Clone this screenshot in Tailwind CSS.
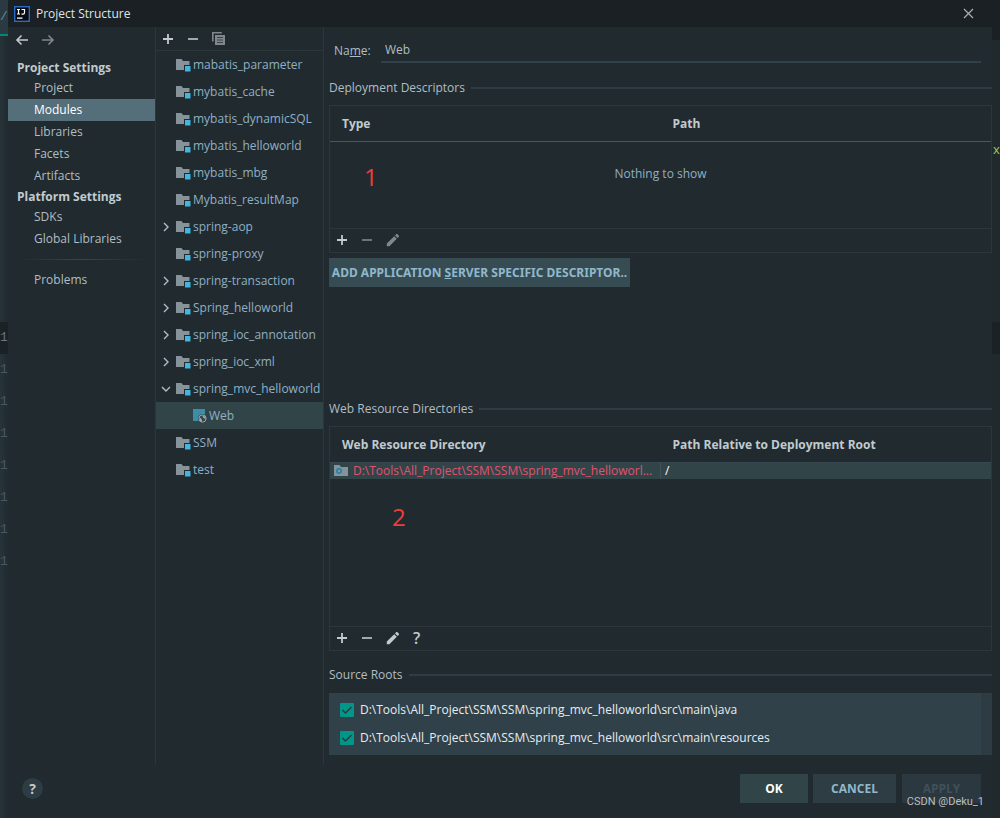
<!DOCTYPE html>
<html lang="en">

<head>
    <meta charset="UTF-8">
    <meta name="viewport" content="width=device-width, initial-scale=1.0">
    <title>Project Structure</title>
    <script src="https://cdn.jsdelivr.net/npm/@tailwindcss/browser@4"></script>
</head>

<body class="bg-[#212a2f] font-['Open_Sans',sans-serif] text-xs text-[#b0bec5]">

    <!-- Shared icons -->
    <svg class="hidden">
        <symbol id="plus" viewBox="0 0 12 12"><path d="M6 1v10M1 6h10" stroke="currentColor" stroke-width="1.8" fill="none" /></symbol>
        <symbol id="minus" viewBox="0 0 12 12"><path d="M1 6h10" stroke="currentColor" stroke-width="1.6" fill="none" /></symbol>
        <symbol id="pencil" viewBox="0 0 14 14"><path d="M.8 10.6v2.6h2.6l7.4-7.4-2.6-2.6zM9 2.4 11.6 5l1.3-1.3c.3-.3.3-.7 0-1l-1.6-1.6c-.3-.3-.7-.3-1 0z" fill="currentColor" /></symbol>
        <symbol id="folder" viewBox="0 0 15 14">
            <path d="M0 1h5.5L7 3h6.5v4H8v5H0z" fill="#87939a" />
            <path d="M9 8h5.5v5.5H9z" fill="#40b6e0" />
        </symbol>
        <symbol id="right" viewBox="0 0 8 10"><path d="M2 1l4 4-4 4" stroke="currentColor" stroke-width="1.4" fill="none" /></symbol>
        <symbol id="down" viewBox="0 0 10 8"><path d="M1 2l4 4 4-4" stroke="currentColor" stroke-width="1.4" fill="none" /></symbol>
    </svg>

    <div class="flex min-h-screen">

        <!-- Editor gutter behind the dialog -->
        <div class="flex w-2 shrink-0 flex-col bg-linear-to-r from-[#26343a] to-[#212a2f] font-['Liberation_Mono',monospace] text-[13px] text-[#4b585e]">
            <div class="flex h-9 items-center border-b-2 border-[#00897b] bg-[#2b3a42] text-[#4f8ea8]">/</div>
            <div class="h-[286px]"></div>
            <div class="flex h-8 items-center bg-[#1b2225] text-[#65757b]">1</div>
            <div class="flex h-8 items-center">1</div>
            <div class="flex h-8 items-center">1</div>
            <div class="flex h-8 items-center">1</div>
            <div class="flex h-8 items-center">1</div>
            <div class="flex h-8 items-center">1</div>
            <div class="flex h-8 items-center">1</div>
            <div class="flex h-8 items-center">1</div>
        </div>

        <!-- Dialog -->
        <div class="flex min-w-0 flex-1 flex-col">
            <header class="flex h-[27px] items-center bg-[#1a2023] pr-[18px] pl-[6px] text-[#dfe5e8]">
                <svg class="mr-[6px] size-4" viewBox="0 0 16 16">
                    <rect x=".7" y=".7" width="14.6" height="14.6" fill="#080c12" stroke="#2a6cc4" stroke-width="1.4" />
                    <path d="M3 3.5h3M4.500 3.500v4.500M3 8h3M7.500 3.500h3v3.200c0 1-.5 1.400-1.400 1.400H7.500M3 12.200h5.500" stroke="#fff" stroke-width="1.200" fill="none" />
                </svg>
                <h1 class="flex-1">Project Structure</h1>
                <button type="button" aria-label="Close" class="text-[#a9b0b3]">
                    <svg class="size-[11px]" viewBox="0 0 11 11"><path d="M1 1l9 9M10 1l-9 9" stroke="currentColor" stroke-width="1.200" /></svg>
                </button>
            </header>

            <div class="flex flex-1">
                <!-- Settings navigation -->
                <nav class="w-[148px] shrink-0 border-r border-[#2c373c]">
                    <div class="flex h-[31px] items-center gap-3 pb-[5px] pl-[7px]">
                        <button type="button" aria-label="Back" class="text-[#c3cacd]">
                            <svg class="h-3 w-[14px]" viewBox="0 0 14 12"><path d="M13 6H2M6.500 1.500L2 6l4.500 4.500" stroke="currentColor" stroke-width="1.600" fill="none" /></svg>
                        </button>
                        <button type="button" aria-label="Forward" class="text-[#80888b]">
                            <svg class="h-3 w-[14px]" viewBox="0 0 14 12"><path d="M1 6h11M7.500 1.500L12 6l-4.500 4.500" stroke="currentColor" stroke-width="1.600" fill="none" /></svg>
                        </button>
                    </div>
                    <h2 class="pl-[9px] font-bold leading-[19px] text-[#c0cbd0]">Project Settings</h2>
                    <a href="#" class="block pl-[26px] leading-[22px]">Project</a>
                    <a href="#" class="block bg-[#546e7a] pl-[26px] leading-[22px] text-white">Modules</a>
                    <a href="#" class="block pl-[26px] leading-[22px]">Libraries</a>
                    <a href="#" class="block pl-[26px] leading-[22px]">Facets</a>
                    <a href="#" class="block pl-[26px] leading-[22px]">Artifacts</a>
                    <h2 class="pl-[9px] font-bold leading-[19px] text-[#c0cbd0]">Platform Settings</h2>
                    <a href="#" class="block pl-[26px] leading-[22px]">SDKs</a>
                    <a href="#" class="block pl-[26px] leading-[22px]">Global Libraries</a>
                    <div class="mx-2 my-[9px] h-px bg-linear-to-r from-transparent via-[#37474f] to-transparent"></div>
                    <a href="#" class="block pl-[26px] leading-[22px]">Problems</a>
                </nav>

                <!-- Module tree -->
                <section class="w-[168px] shrink-0 border-r border-[#2c373c] text-[#8fb0c4]">
                    <div class="flex h-6 items-center gap-[13px] border-b border-[#2c373c] pl-[6px] text-[#c3cacd]">
                        <button type="button" aria-label="Add"><svg class="size-3"><use href="#plus" /></svg></button>
                        <button type="button" aria-label="Remove"><svg class="size-3"><use href="#minus" /></svg></button>
                        <button type="button" aria-label="Copy" class="text-[#80888b]">
                            <svg class="size-[13px]" viewBox="0 0 13 13">
                                <path d="M.8 9.500V.8h9" stroke="currentColor" stroke-width="1.600" fill="none" />
                                <path d="M3 3h10v10H3z" fill="currentColor" />
                                <path d="M5 5.500h6M5 8h6M5 10.500h6" stroke="#3a4347" stroke-width="1" />
                            </svg>
                        </button>
                    </div>
                    <ul id="tree"></ul>
                </section>

                <!-- Facet editor -->
                <main class="flex min-w-0 flex-1 flex-col pt-[11px] pb-[10px] pl-[5px]">
                    <div class="flex h-[25px] items-stretch pr-[11px] pl-[5px]">
                        <label for="name" class="w-[47px] leading-[25px]">Na<u>m</u>e:</label>
                        <input type="text" id="name" value="Web" class="min-w-0 flex-1 border-b-2 border-[#314149] bg-transparent px-1 outline-none">
                    </div>

                    <div class="mt-[15px] flex h-5 items-center gap-[6px]">
                        <h3>Deployment Descriptors</h3>
                        <div class="h-[2px] flex-1 bg-[#2f3c42]"></div>
                    </div>
                    <div class="mt-[7px] border border-[#2c373c]">
                        <table class="w-full table-fixed text-left">
                            <thead>
                                <tr class="h-[35px] border-b border-[#415a63] text-[#c0cbd0]">
                                    <th class="px-3 pt-[2px] font-bold">Type</th>
                                    <th class="px-3 pt-[2px] font-bold">Path</th>
                                </tr>
                            </thead>
                            <tbody>
                                <tr class="h-[87px]">
                                    <td colspan="2" class="pb-[22px] text-center text-[#8fb0c4]">Nothing to show</td>
                                </tr>
                            </tbody>
                        </table>
                        <div class="flex h-6 items-center gap-[13px] border-t border-[#2c373c] pb-px pl-[6px] text-[#c3cacd]">
                            <button type="button" aria-label="Add descriptor"><svg class="size-3"><use href="#plus" /></svg></button>
                            <button type="button" aria-label="Remove descriptor" class="text-[#80888b]"><svg class="size-3"><use href="#minus" /></svg></button>
                            <button type="button" aria-label="Edit descriptor" class="text-[#80888b]"><svg class="size-[14px]"><use href="#pencil" /></svg></button>
                        </div>
                    </div>
                    <button type="button" class="mt-[5px] h-[29px] w-[301px] whitespace-nowrap bg-[#374b52] font-['Noto_Sans',sans-serif] font-bold text-[#8fb8cc]">ADD APPLICATION <u>S</u>ERVER SPECIFIC DESCRIPTOR..</button>

                    <div class="min-h-4 flex-1"></div>

                    <div class="flex h-5 items-center gap-[6px]">
                        <h3>Web Resource Directories</h3>
                        <div class="h-[2px] flex-1 bg-[#2f3c42]"></div>
                    </div>
                    <div class="mt-[7px] flex h-[225px] flex-col border border-[#2c373c]">
                        <table class="w-full table-fixed text-left">
                            <thead>
                                <tr class="h-[35px] border-b border-[#37474f] text-[#c0cbd0]">
                                    <th class="px-3 pt-[2px] font-bold">Web Resource Directory</th>
                                    <th class="px-3 pt-[2px] font-bold">Path Relative to Deployment Root</th>
                                </tr>
                            </thead>
                            <tbody>
                                <tr class="bg-[#314549]">
                                    <td class="border-r border-[#3f545a] p-0 pl-1">
                                        <div class="flex h-4 items-center gap-1 text-[#e0526f]">
                                            <svg class="h-3 w-[15px] shrink-0" viewBox="0 0 15 12">
                                                <path d="M0 0h5.500L7 2h7v9H0z" fill="#87939a" />
                                                <circle cx="5" cy="6" r="2.200" fill="#87939a" stroke="#2382a8" stroke-width="1.600" />
                                            </svg>
                                            <span>D:\Tools\All_Project\SSM\SSM\spring_mvc_helloworl...</span>
                                        </div>
                                    </td>
                                    <td class="p-0 pl-1 leading-4 text-white">/</td>
                                </tr>
                            </tbody>
                        </table>
                        <div class="mt-auto flex h-6 items-center gap-[13px] border-t border-[#2c373c] pb-px pl-[6px] text-[#c3cacd]">
                            <button type="button" aria-label="Add directory"><svg class="size-3"><use href="#plus" /></svg></button>
                            <button type="button" aria-label="Remove directory"><svg class="size-3"><use href="#minus" /></svg></button>
                            <button type="button" aria-label="Edit directory"><svg class="size-[14px]"><use href="#pencil" /></svg></button>
                            <button type="button" class="text-base font-semibold leading-none">?</button>
                        </div>
                    </div>

                    <div class="mt-[14px] flex h-5 items-center gap-[6px]">
                        <h3>Source Roots</h3>
                        <div class="h-[2px] flex-1 bg-[#2f3c42]"></div>
                    </div>
                    <div class="mt-2 border-r-[11px] border-[#2d3c43] bg-[#314149] py-[3px] pl-[11px] text-[#e6edf0]">
                        <label class="flex h-7 items-center gap-[6px]">
                            <span class="grid">
                                <input type="checkbox" checked class="col-start-1 row-start-1 size-[14px] appearance-none rounded-[1px] bg-[#009688]">
                                <svg class="col-start-1 row-start-1 size-[14px]" viewBox="0 0 14 14"><path d="M2.500 7l3 3 6-6" stroke="#263c42" stroke-width="1.500" fill="none" /></svg>
                            </span>
                            D:\Tools\All_Project\SSM\SSM\spring_mvc_helloworld\src\main\java
                        </label>
                        <label class="flex h-7 items-center gap-[6px]">
                            <span class="grid">
                                <input type="checkbox" checked class="col-start-1 row-start-1 size-[14px] appearance-none rounded-[1px] bg-[#009688]">
                                <svg class="col-start-1 row-start-1 size-[14px]" viewBox="0 0 14 14"><path d="M2.500 7l3 3 6-6" stroke="#263c42" stroke-width="1.500" fill="none" /></svg>
                            </span>
                            D:\Tools\All_Project\SSM\SSM\spring_mvc_helloworld\src\main\resources
                        </label>
                    </div>
                </main>
            </div>

            <footer class="flex h-[53px] items-start pt-[9px] pr-[11px] pl-[14px] font-bold">
                <button type="button" class="mt-1 mr-auto size-[21px] rounded-full bg-[#2e3c43] text-sm leading-none text-[#c3cacd]">?</button>
                <button type="button" class="h-[29px] w-[68px] bg-[#314549] text-white">OK</button>
                <button type="button" class="ml-[5px] h-[29px] w-[83px] bg-[#2e3c43] text-[#8fb8cc]">CANCEL</button>
                <button type="button" disabled class="ml-[6px] h-[29px] w-[79px] bg-[#2b383f] text-[#415059]">APPLY</button>
            </footer>
        </div>

        <!-- Editor edge on the right -->
        <div class="w-2 shrink-0 bg-[#20292c]">
            <div class="h-10 bg-[#1a2023]"></div>
            <div class="mt-[99px] pl-px text-[13px] leading-5 text-[#a5c261]">x</div>
            <div class="mt-[163px] h-8 bg-[#1b2225]"></div>
        </div>
    </div>

    <!-- Annotations drawn over the dialog -->
    <div class="absolute top-[161px] left-[364px] text-2xl text-[#f03b3b]">1</div>
    <div class="absolute top-[501px] left-[392px] text-2xl text-[#f03b3b]">2</div>
    <div class="absolute right-4 bottom-2 font-[Roboto,sans-serif] text-[11px] leading-4 text-[#b9bec0]">CSDN @Deku_1</div>

    <script>
        // "right" collapsed, "down" expanded, "facet" a child row
        const modules = [
            ['mabatis_parameter', ''],
            ['mybatis_cache', ''],
            ['mybatis_dynamicSQL', ''],
            ['mybatis_helloworld', ''],
            ['mybatis_mbg', ''],
            ['Mybatis_resultMap', ''],
            ['spring-aop', 'right'],
            ['spring-proxy', ''],
            ['spring-transaction', 'right'],
            ['Spring_helloworld', 'right'],
            ['spring_ioc_annotation', 'right'],
            ['spring_ioc_xml', 'right'],
            ['spring_mvc_helloworld', 'down'],
            ['Web', 'facet'],
            ['SSM', ''],
            ['test', '']
        ];

        const webIcon = `
            <svg class="mr-px h-[14px] w-[15px] shrink-0" viewBox="0 0 15 14">
                <path d="M0 0h12v12H0z" fill="#3b8ea8" />
                <circle cx="9.5" cy="9.5" r="4.5" fill="#314549" />
                <circle cx="9.5" cy="9.5" r="3.6" fill="#314549" stroke="#9aa7b0" stroke-width="1" />
                <path d="M6.500 8l2.500 2.500v2.300L7 12zM9 6.300l3.500 1.500v2.500L10.500 9z" fill="#9aa7b0" />
            </svg>`;

        document.getElementById('tree').innerHTML = modules.map(([name, state]) => {
            if (state === 'facet') {
                return `<li class="flex h-[27px] items-center bg-[#314549] pl-[37px]">${webIcon}${name}</li>`;
            }
            const arrow = state ? `<svg class="size-[10px] text-[#b0bec5]"><use href="#${state}" /></svg>` : '';
            return `
                <li class="flex h-[27px] items-center whitespace-nowrap pl-[5px]">
                    <span class="w-[15px] shrink-0">${arrow}</span>
                    <svg class="mr-[2px] h-[14px] w-[15px] shrink-0"><use href="#folder" /></svg>
                    ${name}
                </li>`;
        }).join('');
    </script>
</body>

</html>
